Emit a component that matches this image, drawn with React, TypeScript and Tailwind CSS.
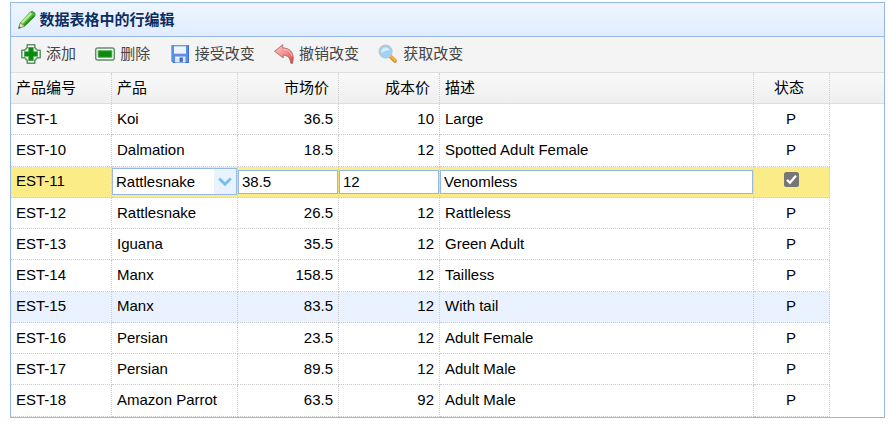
import React from 'react';

type Row = {
  id: string;
  product: string;
  list: string;
  cost: string;
  attr: string;
  h: string;
  pt?: string;
};

const rows: Row[] = [
  { id: 'EST-1', product: 'Koi', list: '36.5', cost: '10', attr: 'Large', h: 'h-[31px]' },
  { id: 'EST-10', product: 'Dalmation', list: '18.5', cost: '12', attr: 'Spotted Adult Female', h: 'h-[32px]' },
  { id: 'EST-11', product: 'Rattlesnake', list: '38.5', cost: '12', attr: 'Venomless', h: 'h-[31px]' },
  { id: 'EST-12', product: 'Rattlesnake', list: '26.5', cost: '12', attr: 'Rattleless', h: 'h-[31px]' },
  { id: 'EST-13', product: 'Iguana', list: '35.5', cost: '12', attr: 'Green Adult', h: 'h-[31px]' },
  { id: 'EST-14', product: 'Manx', list: '158.5', cost: '12', attr: 'Tailless', h: 'h-[32px]' },
  { id: 'EST-15', product: 'Manx', list: '83.5', cost: '12', attr: 'With tail', h: 'h-[31px]', pt: 'pt-[3px]' },
  { id: 'EST-16', product: 'Persian', list: '23.5', cost: '12', attr: 'Adult Female', h: 'h-[31px]' },
  { id: 'EST-17', product: 'Persian', list: '89.5', cost: '12', attr: 'Adult Male', h: 'h-[31px]' },
  { id: 'EST-18', product: 'Amazon Parrot', list: '63.5', cost: '92', attr: 'Adult Male', h: 'h-[32px]' },
];

const grid = 'grid grid-cols-[101px_126px_101px_101px_314px_76px] w-[819px]';
const cellBase = 'border-r border-b border-dotted border-[#ccc] px-[5px] leading-[22px] whitespace-nowrap';
const headCell = 'border-r border-dotted border-[#ccc] px-[5px] pt-[4px] leading-[22px] whitespace-nowrap';
const editCell = 'border-r border-b border-dotted border-[#ccc]';
const input = 'block h-[24px] w-full border border-[#95b8e7] bg-white px-[3px] pb-[2px] leading-[20px] outline-none';

function PencilIcon() {
  return (
    <svg width="20" height="20" viewBox="0 0 20 20">
      <path d="M1.6 18.4 L3.4 12.7 L13.4 2 Q15.2 .7 17.4 2.6 Q19 4.4 17.6 6.4 L7.6 16.2 Z" fill="#57b53c" stroke="#3f8f35" strokeWidth="1" />
      <path d="M4.8 12.9 L14.3 3.2" stroke="#b9ec92" strokeWidth="2.4" />
      <path d="M7.2 15.2 L17 5.6" stroke="#2c8f20" strokeWidth="1.5" />
      <path d="M1.6 18.4 L3.3 13 L7.2 16.2 Z" fill="#e9e3c4" stroke="#8b9c76" strokeWidth=".6" />
      <path d="M1.6 18.4 L2.4 16.2 L3.9 17.5 Z" fill="#455040" />
    </svg>
  );
}

function AddIcon() {
  return (
    <svg width="20" height="20" viewBox="0 0 20 20">
      <path d="M6.2 .8 H13.8 V3.6 L16.4 6.2 H19.2 V13.8 H16.4 L13.8 16.4 V19.2 H6.2 V16.4 L3.6 13.8 H.8 V6.2 H3.6 L6.2 3.6 Z" fill="#fff" stroke="#5b9164" strokeWidth="1.5" strokeLinejoin="round" />
      <path d="M7.2 3 H12.8 V7.2 H17 V12.8 H12.8 V17 H7.2 V12.8 H3 V7.2 H7.2 Z" fill="#4aa84b" />
      <path d="M8 4 H12 V8 H16 V12 H12 V16 H8 V12 H4 V8 H8 Z" fill="#0b8a0d" />
    </svg>
  );
}

function RemoveIcon() {
  return (
    <svg width="20" height="20" viewBox="0 0 20 20">
      <rect x=".7" y="4" width="18.6" height="12" rx="2" fill="#fff" stroke="#5b9164" strokeWidth="1.5" />
      <rect x="2.7" y="6.2" width="14.6" height="7.6" fill="#4aa84b" />
      <rect x="3.8" y="7.2" width="12.4" height="5.6" fill="#0b8a0d" />
    </svg>
  );
}

function SaveIcon() {
  return (
    <svg width="20" height="20" viewBox="0 0 20 20">
      <path d="M1 1 H19 V19 H3 L1 17 Z" fill="#5a8fe9" />
      <path d="M1.5 1 V17" stroke="#83aff4" />
      <path d="M18.5 1 V19 M3 18.5 H19" stroke="#3a70d6" />
      <rect x="4" y="1" width="12" height="9" fill="#edf4fc" />
      <rect x="4" y="1" width="12" height="1.3" fill="#6299e9" />
      <path d="M4 9.5 H16" stroke="#bdd3f1" />
      <rect x="5" y="12.5" width="10.5" height="6" fill="#dce5f0" />
      <rect x="9.6" y="13.5" width="3.2" height="4.4" fill="#3569ce" />
      <path d="M6 13.5 H9" stroke="#fff" />
    </svg>
  );
}

function UndoIcon() {
  return (
    <svg width="20" height="20" viewBox="0 0 20 20">
      <defs>
        <linearGradient id="undo" x1="0" y1="0" x2="1" y2="1">
          <stop offset="0" stopColor="#f7c8c5" />
          <stop offset=".5" stopColor="#f29391" />
          <stop offset="1" stopColor="#d93d41" />
        </linearGradient>
      </defs>
      <path d="M.6 7.2 L8.8 .7 V3.9 C15.6 4 19.6 8.4 19.2 15 L18.6 19.4 L16.8 19.2 C16.2 14 13.8 11.4 9.2 11 V13.9 Z" fill="url(#undo)" stroke="#a86a66" strokeWidth=".9" strokeLinejoin="round" />
      <path d="M9.6 5.4 C14.6 5.6 17 8 17.8 12.4" stroke="#f9c1bd" strokeWidth="1" fill="none" />
    </svg>
  );
}

function SearchIcon() {
  return (
    <svg width="20" height="20" viewBox="0 0 20 20">
      <path d="M12.5 12.5 L17 16.9" stroke="#c48a3c" strokeWidth="3.8" strokeLinecap="round" />
      <path d="M13.2 12.6 L17.1 16.4" stroke="#f7b036" strokeWidth="2.4" strokeLinecap="round" />
      <circle cx="7.6" cy="7.6" r="6.2" fill="#9bd3fc" stroke="#b9c7d3" strokeWidth="1.7" />
      <path d="M3.2 7 A4.7 4.7 0 0 1 12 6.3 Q8 5.5 3.2 9 Z" fill="#d4edff" />
    </svg>
  );
}

const tools = [
  { label: '添加', icon: <AddIcon /> },
  { label: '删除', icon: <RemoveIcon /> },
  { label: '接受改变', icon: <SaveIcon /> },
  { label: '撤销改变', icon: <UndoIcon /> },
  { label: '获取改变', icon: <SearchIcon /> },
];

function EditRow({ row }: { row: Row }) {
  return (
    <div className={`${grid} ${row.h} bg-[#fbec88]`}>
      <div className={cellBase + ' pt-[3px]'}>{row.id}</div>
      <div className={editCell + ' pt-px'}>
        <div className="flex h-[27px] w-[125px] border border-[#95b8e7] bg-white">
          <input className="w-[101px] min-w-0 pt-[2px] pl-[3px] outline-none" defaultValue={row.product} />
          <span className="flex w-[22px] items-center justify-center bg-[#e9f2ff]">
            <svg width="14" height="10" viewBox="0 0 14 10">
              <path d="M1.2 1.6 L7 7.2 L12.8 1.6" fill="none" stroke="#76bdf0" strokeWidth="2.8" />
            </svg>
          </span>
        </div>
      </div>
      <div className={editCell + ' pt-[3px]'}><input className={input} defaultValue={row.list} /></div>
      <div className={editCell + ' pt-[3px]'}><input className={input} defaultValue={row.cost} /></div>
      <div className={editCell + ' pt-[3px]'}><input className={input} defaultValue={row.attr} /></div>
      <div className={editCell + ' flex justify-center pt-[5px]'}>
        <span className="h-[15px] w-[15px] rounded-[2.5px] bg-[#767676]">
          <svg width="15" height="15" viewBox="0 0 15 15">
            <path d="M3 7.8 L5.9 10.7 L12 3.8" fill="none" stroke="#fff" strokeWidth="2.3" />
          </svg>
        </span>
      </div>
    </div>
  );
}

export default function App() {
  return (
    <div className="h-[437px] w-[888px] bg-white pt-[2px] pl-[10px] font-['Liberation_Sans','Noto_Sans_CJK_SC',sans-serif] text-[15px] text-black">
      <div className="h-[416px] w-[875px] border border-[#95b8e7]">
        <div className="flex h-[34px] items-center border-b border-[#95b8e7] bg-linear-to-b from-[#eff5ff] to-[#e0ecff] pl-[6px] font-bold text-[#0e2d5f]">
          <PencilIcon />
          <span className="ml-[2.5px] leading-[20px]">数据表格中的行编辑</span>
        </div>
        <div className="flex h-[36px] items-center gap-[19.3px] border-b border-[#ddd] bg-[#f4f4f4] pb-[2px] pl-[10px] text-[#444]">
          {tools.map((t) => (
            <div key={t.label} className="flex items-center gap-[5px]">
              {t.icon}
              <span className="leading-[20px] whitespace-nowrap">{t.label}</span>
            </div>
          ))}
        </div>
        <div className="h-[31px] border-b border-[#ddd] bg-linear-to-b from-[#f9f9f9] to-[#efefef]">
          <div className={`${grid} h-[30px]`}>
            <div className={headCell}>产品编号</div>
            <div className={headCell}>产品</div>
            <div className={headCell + ' pr-[9px] text-right'}>市场价</div>
            <div className={headCell + ' pr-[9px] text-right'}>成本价</div>
            <div className={headCell}>描述</div>
            <div className={headCell + ' pr-[10px] text-center'}>状态</div>
          </div>
        </div>
        {rows.map((r) => {
          if (r.id === 'EST-11') return <EditRow key={r.id} row={r} />;
          const cell = `${cellBase} ${r.pt ?? 'pt-[4px]'}`;
          return (
            <div key={r.id} className={`${grid} ${r.h} ${r.id === 'EST-15' ? 'bg-[#eaf2ff]' : ''}`}>
              <div className={cell}>{r.id}</div>
              <div className={cell}>{r.product}</div>
              <div className={cell + ' text-right'}>{r.list}</div>
              <div className={cell + ' text-right'}>{r.cost}</div>
              <div className={cell}>{r.attr}</div>
              <div className={cell + ' pr-[6px] text-center'}>P</div>
            </div>
          );
        })}
      </div>
    </div>
  );
}
